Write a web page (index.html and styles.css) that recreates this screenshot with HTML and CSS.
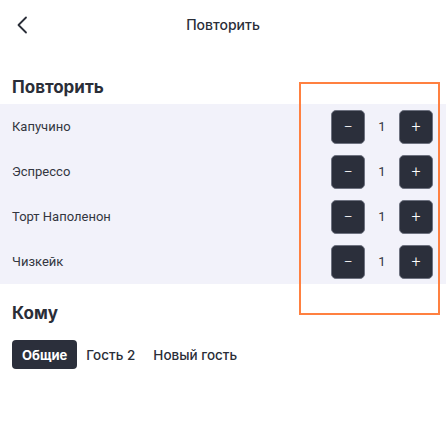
FILE: index.html
```html
<!DOCTYPE html>
<html lang="ru">
<head>
<meta charset="utf-8">
<link rel="stylesheet" href="styles.css">
</head>
<body>
<div class="page">
  <header class="topbar">
    <button class="back" aria-label="Назад">
      <svg width="12" height="18" viewBox="0 0 12 18"><path d="M10 1.5 L2.5 9 L10 16.5" fill="none" stroke="#2a2e38" stroke-width="1.8" stroke-linecap="round" stroke-linejoin="round"/></svg>
    </button>
    <div class="topbar-title">Повторить</div>
  </header>

  <h2 class="section-title first">Повторить</h2>
  <div class="list">
    <div class="row"><span class="name">Капучино</span><div class="qty"><button class="qbtn">−</button><span class="num">1</span><button class="qbtn">+</button></div></div>
    <div class="row"><span class="name">Эспрессо</span><div class="qty"><button class="qbtn">−</button><span class="num">1</span><button class="qbtn">+</button></div></div>
    <div class="row"><span class="name">Торт Наполенон</span><div class="qty"><button class="qbtn">−</button><span class="num">1</span><button class="qbtn">+</button></div></div>
    <div class="row"><span class="name">Чизкейк</span><div class="qty"><button class="qbtn">−</button><span class="num">1</span><button class="qbtn">+</button></div></div>
  </div>

  <h2 class="section-title">Кому</h2>
  <div class="chips">
    <span class="chip active">Общие</span>
    <span class="chip">Гость 2</span>
    <span class="chip">Новый гость</span>
  </div>

  <div class="highlight"></div>
</div>
</body>
</html>
```

FILE: styles.css
```css
* { box-sizing: border-box; }
html, body { margin: 0; padding: 0; background: #fff; }
body {
  font-family: Inter, Roboto, "Noto Sans", sans-serif;
  color: #2a2e38;
}
.page { position: relative; width: 446px; min-height: 436px; }

.topbar {
  position: relative;
  height: 50px;
  display: flex;
  align-items: center;
  justify-content: center;
}
.back {
  position: absolute;
  left: 16px;
  top: 16px;
  padding: 0;
  border: 0;
  background: none;
  width: 12px;
  height: 18px;
  display: flex;
}
.topbar-title {
  font-size: 14px;
  font-weight: 500;
  line-height: 18px;
}

.section-title {
  margin: 0;
  font-size: 17px;
  font-weight: 700;
  line-height: 22px;
  padding: 0 12px;
}
.section-title.first { padding-top: 26px; padding-bottom: 6px; }

.list { background: #f2f2fa; }
.row {
  height: 45px;
  display: flex;
  align-items: center;
  justify-content: space-between;
  padding: 0 13px 0 12px;
}
.name { font-size: 13px; font-family: Roboto, Inter, sans-serif; color: #33363f; }
.qty { display: flex; align-items: center; }
.qbtn {
  width: 34px;
  height: 34px;
  border-radius: 5px;
  border: 1px solid #6e7280;
  background: #2b2f3b;
  color: #fff;
  font-size: 16px;
  font-weight: 300;
  font-family: Roboto, sans-serif;
  padding: 0;
  display: flex;
  align-items: center;
  justify-content: center;
}
.num {
  width: 34px;
  text-align: center;
  font-size: 13px;
  font-family: Roboto, sans-serif;
  color: #33363f;
}

.section-title:not(.first) { margin-top: 18px; }

.chips {
  display: flex;
  align-items: center;
  padding: 16px 12px 0;
}
.chip {
  height: 29px;
  display: flex;
  align-items: center;
  padding: 0 9px;
  font-size: 13.5px;
  font-weight: 500;
  color: #2a2e38;
}
.chip.active {
  background: #2b2f3b;
  color: #fff;
  font-weight: 700;
  font-size: 13px;
  padding: 0 10px;
  border-radius: 4px;
}

.highlight {
  position: absolute;
  left: 299px;
  top: 82px;
  width: 141px;
  height: 233px;
  border: 2px solid #ff8040;
  pointer-events: none;
}
```
